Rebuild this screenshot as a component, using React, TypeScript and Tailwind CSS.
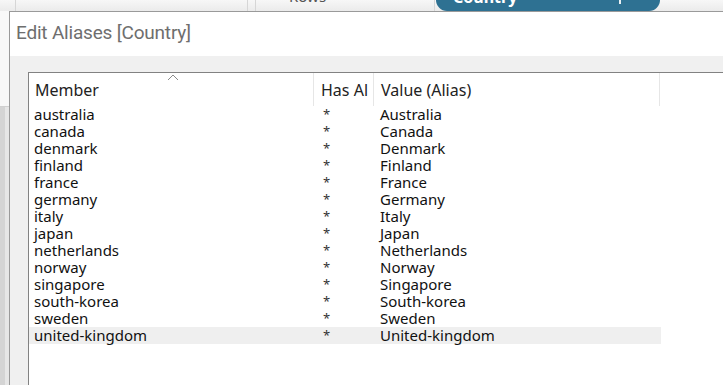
const ROWS: [string, string][] = [
  ['australia', 'Australia'],
  ['canada', 'Canada'],
  ['denmark', 'Denmark'],
  ['finland', 'Finland'],
  ['france', 'France'],
  ['germany', 'Germany'],
  ['italy', 'Italy'],
  ['japan', 'Japan'],
  ['netherlands', 'Netherlands'],
  ['norway', 'Norway'],
  ['singapore', 'Singapore'],
  ['south-korea', 'South-korea'],
  ['sweden', 'Sweden'],
  ['united-kingdom', 'United-kingdom'],
];

function TopStrip() {
  return (
    <div className="flex h-[11px] shrink-0 overflow-hidden bg-gradient-to-b from-[#f7f7f7] to-[#ebebeb]">
      <div className="w-[16px] border-r border-[#d6d6d6]" />
      <div className="w-[232px] border-r border-[#d6d6d6]" />
      <div className="w-[8px] border-r border-[#d6d6d6]" />
      <div className="relative w-[179px] border-r border-[#d6d6d6]">
        <span className="absolute left-[33px] top-[-12px] text-[15px] leading-[17px] text-[#555]">Rows</span>
      </div>
      <div className="relative ml-[1px] w-[224px] rounded-b-[12px] bg-[#2e7192]">
        <span className="absolute left-[17px] top-[-12px] text-[16px] font-bold leading-[18px] text-white">Country</span>
        <span className="absolute left-[183px] top-[-1px] h-[5px] w-[2px] bg-white/90" />
      </div>
      <div className="flex-1" />
    </div>
  );
}

function SortCaret() {
  return (
    <svg width="12" height="7" viewBox="0 0 12 7" className="absolute left-[138px] top-[1px]">
      <path d="M1 6 L6 1 L11 6" fill="none" stroke="#8a8a8a" strokeWidth="1" />
    </svg>
  );
}

export default function App() {
  const cell = 'h-[17px] leading-[17px] whitespace-nowrap';
  return (
    <div
      className="flex h-[385px] w-[723px] flex-col overflow-hidden bg-[#f3f3f3] text-[#111]"
      style={{ fontFamily: '"Noto Sans", "Open Sans", sans-serif' }}
    >
      <TopStrip />
      <div className="flex flex-1">
        <div className="flex w-[9px] flex-col">
          <div className="h-[96px] border-b border-[#d0d0d0] bg-[#f8f8f8]" />
          <div className="flex flex-1">
            <div className="w-[5px] bg-[#d4d4d4]" />
            <div className="flex-1 bg-[#e6e6e6]" />
          </div>
        </div>
        <div className="flex flex-1 flex-col border-l border-t border-[#9a9a9a] bg-[#f0f0f0]">
          <div className="flex h-[44px] items-center bg-white pb-[1px] pl-[6px]">
            <span
              className="text-[19px] tracking-[-0.2px] text-[#6e6e6e]"
              style={{ fontFamily: 'Roboto, "Noto Sans", sans-serif' }}
            >
              Edit Aliases [Country]
            </span>
          </div>
          <div className="flex flex-1 flex-col pl-[18px] pt-[16px]">
            <div className="flex-1 border-l border-t border-[#828282] bg-white text-[15px]">
              <div className="flex h-[33px] text-[16px] text-[#222]">
                <div className="relative flex w-[285px] items-center border-r border-[#e6e6e6] pl-[6px] pt-[1px]">
                  <SortCaret />
                  Member
                </div>
                <div className="flex w-[60px] items-center border-r border-[#e6e6e6] pl-[7px] pt-[1px]">Has Al</div>
                <div className="flex w-[286px] items-center border-r border-[#e6e6e6] pl-[7px] pt-[1px]">Value (Alias)</div>
              </div>
              <div>
                {ROWS.map(([m, v], i) => (
                  <div key={m} className={`flex w-[632px] ${i === ROWS.length - 1 ? 'bg-[#efefef]' : ''}`}>
                    <div className={`${cell} w-[286px] pl-[5px]`}>{m}</div>
                    <div className={`${cell} w-[60px] pl-[8px] text-[13px] text-[#333]`}>*</div>
                    <div className={`${cell} flex-1 pl-[5px]`}>{v}</div>
                  </div>
                ))}
              </div>
            </div>
          </div>
        </div>
      </div>
    </div>
  );
}
